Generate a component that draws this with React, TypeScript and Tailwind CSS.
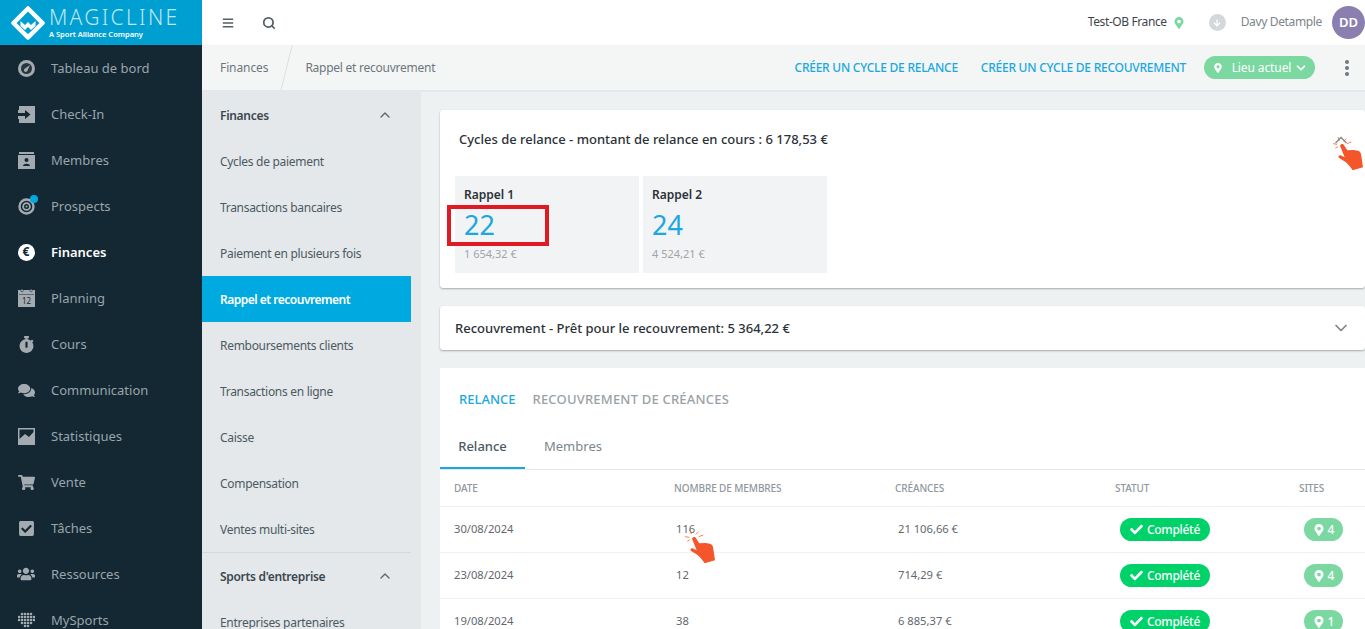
import { ReactNode } from 'react'
import { ChevronDown, ChevronUp, Search } from 'lucide-react'
import {
  FaStopwatch,
  FaComments,
  FaShoppingCart,
  FaCheckSquare,
  FaUsers,
  FaMapMarkerAlt,
  FaCheck,
  FaArrowDown,
  FaBars,
} from 'react-icons/fa'

const font = { fontFamily: '"Noto Sans", sans-serif' }

function Logo() {
  return (
    <svg width="34" height="34" viewBox="0 0 34 34" className="shrink-0">
      <path d="M17 2.500 L31.500 17 L17 31.500 L2.500 17 Z" fill="none" stroke="#fff" strokeWidth="4.500" strokeLinejoin="round" />
      <path d="M9.500 15 L14 19 L17 16 L20 19 L24.500 15 L24.500 20 L20 24 L17 21 L14 24 L9.500 20 Z" fill="#fff" />
      <path d="M13 25 L17 28 L21 25 L21 26.500 L17 30 L13 26.500 Z" fill="#fff" />
    </svg>
  )
}

function GaugeIcon() {
  return (
    <svg width="17" height="17" viewBox="0 0 17 17">
      <circle cx="8.500" cy="8.500" r="8.500" fill="#a3abb0" />
      <circle cx="8.500" cy="8.500" r="5.500" fill="#26373f" />
      <path d="M12 5 L9.500 10.500 A1.800 1.800 0 1 1 7 8.500 Z" fill="#a3abb0" />
    </svg>
  )
}

function CheckInIcon() {
  return (
    <svg width="17" height="17" viewBox="0 0 17 17">
      <path d="M1 0H17V17H1V13H0V4H1Z" fill="#a3abb0" />
      <path d="M0 7H7V4L12.500 8.500L7 13V10H0Z" fill="#132833" />
    </svg>
  )
}

function MembersIcon() {
  return (
    <svg width="17" height="17" viewBox="0 0 17 17">
      <path d="M1 0H16V2H1Z" fill="#a3abb0" />
      <path d="M0 3H17V17H0Z" fill="#a3abb0" />
      <circle cx="8.500" cy="8" r="2" fill="#132833" />
      <path d="M5 14C5 11 12 11 12 14Z" fill="#132833" />
    </svg>
  )
}

function TargetIcon() {
  return (
    <svg width="17" height="17" viewBox="0 0 17 17" fill="none" stroke="#a3abb0">
      <circle cx="8.500" cy="8.500" r="7" strokeWidth="2.400" />
      <circle cx="8.500" cy="8.500" r="3.400" strokeWidth="1.800" />
      <circle cx="8.500" cy="8.500" r="1" fill="#a3abb0" strokeWidth="0" />
    </svg>
  )
}

function EuroIcon() {
  return (
    <span className="flex h-[17px] w-[17px] items-center justify-center rounded-full bg-white text-[12px] font-bold leading-none text-[#132833]">
      €
    </span>
  )
}

function CalendarIcon() {
  return (
    <svg width="17" height="18" viewBox="0 0 17 18">
      <path d="M0 1H17V18H0Z" fill="#a3abb0" />
      <path d="M1 5.500H16V6H1Z" fill="#132833" />
      <circle cx="4" cy="1.500" r="1.300" fill="#a3abb0" stroke="#132833" strokeWidth="0.500" />
      <circle cx="13" cy="1.500" r="1.300" fill="#a3abb0" stroke="#132833" strokeWidth="0.500" />
      <text x="8.500" y="15" textAnchor="middle" fontSize="8" fill="#132833" fontFamily="Noto Sans">12</text>
    </svg>
  )
}

function ChartIcon() {
  return (
    <svg width="17" height="17" viewBox="0 0 17 17">
      <path d="M0 0H17V17H0Z" fill="#a3abb0" />
      <path d="M1.500 1.500H15.500V4L11 9L7 6L1.500 11Z" fill="#132833" />
    </svg>
  )
}

function DotsIcon() {
  const rows = [
    [4, 7, 10, 13],
    [1, 4, 7, 10, 13, 16],
    [1, 4, 7, 10, 13, 16],
    [4, 7, 10, 13],
    [7, 10],
  ]
  return (
    <svg width="17" height="16" viewBox="0 0 17 16">
      {rows.map((r, y) =>
        r.map((x) => <circle key={`${x}-${y}`} cx={x} cy={y * 3 + 2} r="1.300" fill="#a3abb0" />),
      )}
    </svg>
  )
}

// pointing hand with click sparks, drawn on a 3x grid
function Hand({ className }: { className: string }) {
  return (
    <svg width="60" height="50" viewBox="0 0 180 150" className={`absolute ${className}`}>
      <path
        d="M66 56c3-7 11-6 13 0l9 14 18-1 14 2c5 1 8 5 9 10l6 40-31 9c-6-10-14-18-21-25l-21-13c-2-4 1-8 6-7l12 6-14-35Z"
        fill="#f4552b"
      />
      <path d="M60 30l4 12M45 50l13 2M85 35l-7 8M100 45l-14 5M52 64l8-5" stroke="#f4552b" strokeWidth="2.200" fill="none" />
    </svg>
  )
}

const mainNav: { label: string; icon: ReactNode; active?: boolean; dot?: boolean }[] = [
  { label: 'Tableau de bord', icon: <GaugeIcon /> },
  { label: 'Check-In', icon: <CheckInIcon /> },
  { label: 'Membres', icon: <MembersIcon /> },
  { label: 'Prospects', icon: <TargetIcon />, dot: true },
  { label: 'Finances', icon: <EuroIcon />, active: true },
  { label: 'Planning', icon: <CalendarIcon /> },
  { label: 'Cours', icon: <FaStopwatch size={17} /> },
  { label: 'Communication', icon: <FaComments size={17} /> },
  { label: 'Statistiques', icon: <ChartIcon /> },
  { label: 'Vente', icon: <FaShoppingCart size={17} /> },
  { label: 'Tâches', icon: <FaCheckSquare size={17} /> },
  { label: 'Ressources', icon: <FaUsers size={18} /> },
  { label: 'MySports', icon: <DotsIcon /> },
]

const subNav = [
  'Cycles de paiement',
  'Transactions bancaires',
  'Paiement en plusieurs fois',
  'Rappel et recouvrement',
  'Remboursements clients',
  'Transactions en ligne',
  'Caisse',
  'Compensation',
  'Ventes multi-sites',
]

const rows = [
  { date: '30/08/2024', members: '116', amount: '21 106,66 €', sites: 4 },
  { date: '23/08/2024', members: '12', amount: '714,29 €', sites: 4 },
  { date: '19/08/2024', members: '38', amount: '6 885,37 €', sites: 1 },
]

function Sidebar() {
  return (
    <aside className="flex w-[202px] shrink-0 flex-col bg-[#132833]">
      <div className="flex h-[45px] shrink-0 items-center gap-[4px] bg-[#009fd1] pl-[11px]">
        <Logo />
        <div className="flex flex-col text-white">
          <span className="text-[21px] font-light leading-[23px] tracking-[2.300px] text-[#bfe6f3]">MAGICLINE</span>
          <span className="text-[7.500px] font-semibold leading-[10px]">A Sport Alliance Company</span>
        </div>
      </div>
      {mainNav.map((item) => (
        <div
          key={item.label}
          className={`flex h-[46px] shrink-0 items-center gap-[16px] pl-[17px] text-[13px] ${
            item.active ? 'font-semibold text-white' : 'text-[#9aa5ab]'
          }`}
        >
          <span className="relative flex w-[18px] justify-center text-[#a3abb0]">
            {item.icon}
            {item.dot && <span className="absolute right-[-3px] top-[-3px] h-[8px] w-[8px] rounded-full bg-[#00a9e0]" />}
          </span>
          <span className="pt-[2px]">{item.label}</span>
        </div>
      ))}
    </aside>
  )
}

function SubSidebar() {
  return (
    <aside className="w-[219px] shrink-0 overflow-hidden bg-[#e4e8ea] text-[12px] tracking-[-0.3px] text-[#4d5a62]">
      <div className="flex h-[46px] items-center justify-between pl-[18px] pr-[28px] font-semibold text-[#3b4750]">
        <span className="pt-[2px]">Finances</span>
        <ChevronUp size={16} className="text-[#5b666d]" />
      </div>
      {subNav.map((label) => (
        <div
          key={label}
          className={`flex h-[46px] w-[209px] items-center pl-[18px] pt-[2px] ${
            label === 'Rappel et recouvrement' ? 'bg-[#00a9e0] font-semibold tracking-[-0.5px] text-white' : ''
          }`}
        >
          {label}
        </div>
      ))}
      <div className="w-[209px] border-t border-[#d3d8db]">
        <div className="flex h-[46px] items-center justify-between pl-[18px] pr-[18px] font-semibold text-[#3b4750]">
          <span className="pt-[2px]">Sports d'entreprise</span>
          <ChevronUp size={16} className="text-[#5b666d]" />
        </div>
        <div className="flex h-[46px] items-center pl-[18px] pt-[2px]">Entreprises partenaires</div>
      </div>
    </aside>
  )
}

function ReminderBox({ title, count, amount }: { title: string; count: string; amount: string }) {
  return (
    <div className="flex h-[97px] w-[184px] flex-col bg-[#f2f3f5] pl-[9px] pt-[10px]">
      <span className="text-[12px] font-semibold leading-[18px] text-[#2b3238]">{title}</span>
      <span className="mt-[3px] text-[27px] leading-[36px] text-[#1ba8df]">{count}</span>
      <span className="mt-[3px] text-[11px] leading-[16px] text-[#a0a5a9]">{amount}</span>
    </div>
  )
}

function Table() {
  return (
    <div>
      <div className="grid h-[37px] grid-cols-[220px_221px_220px_184px_1fr] items-center border-b border-[#eff1f2] px-[14px] text-[10px] font-medium tracking-[-0.1px] text-[#8f979c]">
        <span>DATE</span>
        <span>NOMBRE DE MEMBRES</span>
        <span>CRÉANCES</span>
        <span>STATUT</span>
        <span>SITES</span>
      </div>
      {rows.map((row) => (
        <div
          key={row.date}
          className="grid h-[46px] grid-cols-[220px_221px_220px_184px_1fr] items-center border-b border-[#eff1f2] px-[14px] text-[11.200px] text-[#5f686e]"
        >
          <span>{row.date}</span>
          <span className="pl-[2px]">{row.members}</span>
          <span className="pl-[3px]">{row.amount}</span>
          <span className="pl-[5px]">
            <span className="flex h-[23px] w-[90px] items-center justify-center gap-[4px] rounded-full bg-[#00d26a] text-[12px] font-medium tracking-[-0.3px] text-white">
              <FaCheck size={13} />
              Complété
            </span>
          </span>
          <span className="pl-[5px]">
            <span className="flex h-[23px] w-[39px] items-center justify-center gap-[3px] rounded-full bg-[#7ad8a0] text-[12px] font-medium text-white">
              <FaMapMarkerAlt size={12} />
              {row.sites}
            </span>
          </span>
        </div>
      ))}
    </div>
  )
}

export default function App() {
  return (
    <div className="flex h-[629px] w-full overflow-hidden bg-[#eef1f2]" style={font}>
      <Sidebar />
      <div className="flex min-w-0 flex-1 flex-col">
        <header className="flex h-[45px] shrink-0 items-center bg-white pl-[20px]">
          <FaBars size={12} className="text-[#555e64]" />
          <Search size={14} strokeWidth={3} className="ml-[28px] text-[#555e64]" />
          <div className="ml-auto flex items-center">
            <span className="pb-[2px] text-[12px] tracking-[-0.4px] text-[#3d454b]">Test-OB France</span>
            <FaMapMarkerAlt size={12} className="ml-[6px] text-[#7ad8a0]" />
            <span className="ml-[24px] flex h-[17px] w-[17px] items-center justify-center rounded-full bg-[#d5d8da] text-white">
              <FaArrowDown size={8} />
            </span>
            <span className="ml-[15px] pb-[1px] text-[12px] tracking-[-0.35px] text-[#7c858b]">Davy Detample</span>
            <span className="ml-[10px] flex h-[33px] w-[33px] items-center justify-center rounded-full bg-[#8a7fae] text-[13px] font-semibold text-white">
              DD
            </span>
          </div>
        </header>
        <div className="flex h-[47px] shrink-0 items-center border-b-2 border-[#e4e8ea] bg-[#f4f6f6] text-[12px] text-[#6d767c]">
          <span className="pl-[18px] tracking-[-0.1px]">Finances</span>
          <span className="ml-[18px] h-[46px] w-px origin-center rotate-[14deg] bg-[#dcdfe1]" />
          <span className="ml-[18px] tracking-[-0.25px]">Rappel et recouvrement</span>
          <div className="ml-auto flex items-center pr-[16px] text-[12px] font-medium tracking-[-0.25px] text-[#1ba8df]">
            <span>CRÉER UN CYCLE DE RELANCE</span>
            <span className="ml-[23px]">CRÉER UN CYCLE DE RECOUVREMENT</span>
            <span className="ml-[18px] flex h-[23px] w-[111px] items-center justify-center gap-[9px] rounded-full bg-[#7ad8a0] pl-[2px] text-[12px] font-normal tracking-[-0.1px] text-white">
              <FaMapMarkerAlt size={10} />
              <span className="flex items-center gap-[3px]">
                Lieu actuel
                <ChevronDown size={14} strokeWidth={3} />
              </span>
            </span>
            <span className="ml-[30px] flex flex-col gap-[2px]">
              <span className="h-[4px] w-[4px] rounded-full bg-[#6d767c]" />
              <span className="h-[4px] w-[4px] rounded-full bg-[#6d767c]" />
              <span className="h-[4px] w-[4px] rounded-full bg-[#6d767c]" />
            </span>
          </div>
        </div>
        <div className="flex min-h-0 flex-1">
          <SubSidebar />
          <main className="min-w-0 flex-1 overflow-hidden pl-[19px] pt-[18px]">
            <section className="relative h-[178px] rounded-[3px] bg-white shadow-[0_1px_2px_rgba(0,0,0,0.3)]">
              <div className="h-[66px] pl-[19px] pt-[19px] text-[13px] font-medium leading-[20px] text-[#2b3238]">
                Cycles de relance - montant de relance en cours : 6 178,53 €
              </div>
              <ChevronUp size={20} className="absolute right-[14px] top-[20px] text-[#8c9398]" />
              <Hand className="left-[878px] top-[17px]" />
              <div className="flex gap-[4px] pl-[15px]">
                <div className="relative">
                  <ReminderBox title="Rappel 1" count="22" amount="1 654,32 €" />
                  <div className="absolute left-[-8px] top-[29px] h-[41px] w-[102px] border-[4px] border-[#e01a22]" />
                </div>
                <ReminderBox title="Rappel 2" count="24" amount="4 524,21 €" />
              </div>
            </section>
            <section className="mt-[18px] flex h-[44px] items-center justify-between rounded-[3px] bg-white pl-[15px] pr-[14px] text-[13px] font-medium text-[#2b3238] shadow-[0_1px_2px_rgba(0,0,0,0.3)]">
              <span className="pt-[2px]">Recouvrement - Prêt pour le recouvrement: 5 364,22 €</span>
              <ChevronDown size={20} className="text-[#7d858a]" />
            </section>
            <section className="relative mt-[18px] h-[300px] bg-white">
              <div className="flex h-[62px] items-center gap-[17px] pl-[19px] pt-[2px] text-[13px] font-medium">
                <span className="text-[#1ba8df]">RELANCE</span>
                <span className="tracking-[0.2px] text-[#9aa1a6]">RECOUVREMENT DE CRÉANCES</span>
              </div>
              <div className="flex h-[40px] border-b border-[#e4e8ea] text-[13px]">
                <span className="flex w-[85px] items-center justify-center border-b-2 border-[#1ba8df] pb-[4px] font-medium text-[#4d5a62]">
                  Relance
                </span>
                <span className="ml-[19px] flex items-center pb-[6px] text-[#7c858b]">Membres</span>
              </div>
              <Table />
              <Hand className="left-[230px] top-[152px]" />
            </section>
          </main>
        </div>
      </div>
    </div>
  )
}
